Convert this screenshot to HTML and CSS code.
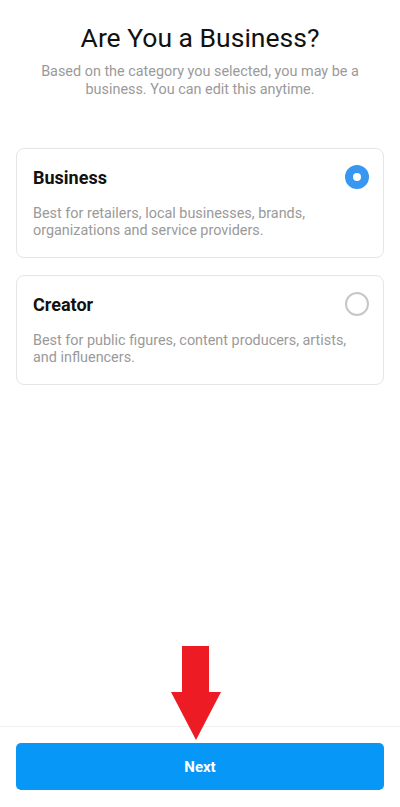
FILE: index.html
```html
<!DOCTYPE html>
<html lang="en">
<head>
  <meta charset="UTF-8" />
  <meta name="viewport" content="width=device-width, initial-scale=1.0"/>
  <title>Are You a Business?</title>
  <link rel="stylesheet" href="styles.css">
</head>
<body>
  <div class="screen">
    <div class="header">
      <h1>Are You a Business?</h1>
      <p class="subtitle">Based on the category you selected, you may be a business. You can edit this anytime.</p>
    </div>

    <div class="options">
      <div class="option">
        <div class="option-top">
          <span class="option-title">Business</span>
          <span class="radio checked"></span>
        </div>
        <p class="option-desc">Best for retailers, local businesses, brands, organizations and service providers.</p>
      </div>
      <div class="option">
        <div class="option-top">
          <span class="option-title">Creator</span>
          <span class="radio"></span>
        </div>
        <p class="option-desc">Best for public figures, content producers, artists, and influencers.</p>
      </div>
    </div>

    <div class="footer">
      <button class="next-button">Next</button>
    </div>

    <!-- annotation arrow over the button -->
    <svg class="arrow" width="52" height="96" viewBox="0 0 52 96">
      <polygon points="12,0 39,0 39,46 51,46 26,94 1,46 12,46" fill="#ed1c24"/>
    </svg>
  </div>
</body>
</html>
```

FILE: styles.css
```css
body {
  margin: 0;
  font-family: Roboto, "Liberation Sans", sans-serif;
  background-color: #fff;
  color: #262626;
}
.screen {
  position: relative;
  width: 400px;
  height: 807px;
  display: flex;
  flex-direction: column;
}
.header {
  padding: 22px 24px 0;
  text-align: center;
}
h1 {
  margin: 0;
  font-size: 26.5px;
  font-weight: 400;
  line-height: 32px;
  color: #111;
}
.subtitle {
  margin: 9px 0 0;
  font-size: 14.4px;
  line-height: 18px;
  color: #9a9a9a;
}
.options {
  display: flex;
  flex-direction: column;
  gap: 17px;
  padding: 0 16px;
  margin-top: 49px;
}
.option {
  border: 1px solid #e6e6e6;
  border-radius: 8px;
  padding: 17px 16px 18px;
}
.option-top {
  display: flex;
  justify-content: space-between;
  align-items: center;
  height: 22px;
}
.option-title {
  font-size: 18px;
  font-weight: 700;
  color: #111;
}
.radio {
  width: 20px;
  height: 20px;
  border: 2px solid #c7c7c7;
  border-radius: 50%;
  margin-right: -2px;
}
.radio.checked {
  width: 8px;
  height: 8px;
  border: 8px solid #3897f0;
}
.option-desc {
  margin: 17px 0 0;
  font-size: 14.4px;
  line-height: 17px;
  color: #9a9a9a;
}
.footer {
  margin-top: auto;
  border-top: 1px solid #efefef;
  padding: 16px 16px 17px;
}
.next-button {
  display: block;
  width: 100%;
  height: 47px;
  border: none;
  border-radius: 5px;
  background-color: #0797f6;
  color: white;
  font-family: Roboto, "Liberation Sans", sans-serif;
  font-size: 15px;
  font-weight: 700;
}
.arrow {
  position: absolute;
  left: 170px;
  top: 646px;
}
```
